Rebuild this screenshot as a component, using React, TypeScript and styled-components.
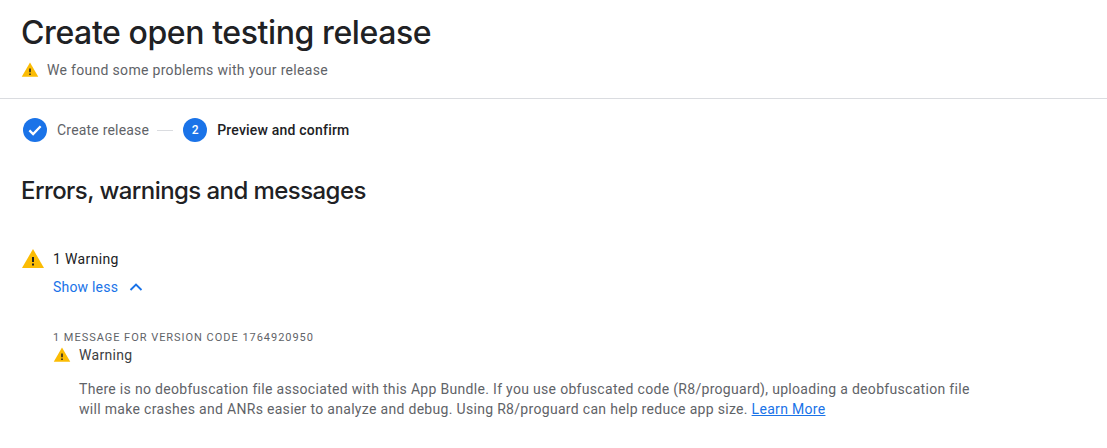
import React from "react";
import styled, { createGlobalStyle } from "styled-components";

const GlobalStyle = createGlobalStyle`
  html, body {
    margin: 0;
    padding: 0;
    background: #fff;
    overflow: hidden;
  }
  body {
    font-family: Roboto, "Liberation Sans", sans-serif;
    color: #202124;
  }
`;

function WarningIcon({ size }: { size: number }) {
  return (
    <svg width={size} height={size} viewBox="0 0 24 24">
      <path d="M1 21 12 2l11 19z" fill="#fbbc04" />
      <path d="M11 10h2v5h-2zM11 16.5h2v2h-2z" fill="#202124" />
    </svg>
  );
}

export default function App() {
  return (
    <Page>
      <GlobalStyle />
      <Header>
        <Title>Create open testing release</Title>
        <Status>
          <WarningIcon size={18} />
          <span>We found some problems with your release</span>
        </Status>
      </Header>
      <Stepper>
        <StepCircle>
          <svg width="18" height="18" viewBox="0 0 24 24">
            <path d="M4.5 12.5 9.5 17.5 19.5 7" fill="none" stroke="#fff" strokeWidth="3" />
          </svg>
        </StepCircle>
        <StepLabel>Create release</StepLabel>
        <StepLine />
        <StepCircle>2</StepCircle>
        <StepLabel $active>Preview and confirm</StepLabel>
      </Stepper>
      <Section>
        <SectionTitle>Errors, warnings and messages</SectionTitle>
        <WarningRow>
          <WarningIcon size={24} />
          <span>1 Warning</span>
        </WarningRow>
        <Details>
          <Toggle>
            Show less
            <svg width="16" height="16" viewBox="0 0 16 16">
              <path d="M2.5 11 8 5.5 13.5 11" fill="none" stroke="#1a73e8" strokeWidth="1.9" />
            </svg>
          </Toggle>
          <Overline>1 message for version code 1764920950</Overline>
          <MessageHead>
            <WarningIcon size={18} />
            <span>Warning</span>
          </MessageHead>
          <MessageBody>
            There is no deobfuscation file associated with this App Bundle. If you use obfuscated
            code (R8/proguard), uploading a deobfuscation file will make crashes and ANRs easier to
            analyze and debug. Using R8/proguard can help reduce app size. <a href="#">Learn More</a>
          </MessageBody>
        </Details>
      </Section>
    </Page>
  );
}

const Page = styled.div`
  width: 1107px;
  height: 448px;
  overflow: hidden;
`;

const Header = styled.header`
  padding: 13px 0 18px 21px;
  border-bottom: 1px solid #dadce0;
`;

const Title = styled.h1`
  margin: 0;
  font-family: Inter, sans-serif;
  font-weight: 450;
  font-size: 32px;
  line-height: 40px;
  letter-spacing: -0.41px;
  color: #202124;
`;

const Status = styled.div`
  display: flex;
  align-items: center;
  gap: 8px;
  margin-top: 7px;
  font-size: 14px;
  line-height: 20px;
  letter-spacing: 0.31px;
  color: #5f6368;
`;

const Stepper = styled.div`
  display: flex;
  align-items: center;
  padding: 19px 0 0 23px;
`;

const StepCircle = styled.div`
  display: flex;
  align-items: center;
  justify-content: center;
  width: 24px;
  height: 24px;
  border-radius: 50%;
  background: #1a73e8;
  color: #fff;
  font-size: 12px;
  font-weight: 500;
`;

const StepLabel = styled.span<{ $active?: boolean }>`
  margin-left: 10px;
  font-size: 14px;
  line-height: 24px;
  letter-spacing: 0.2px;
  font-weight: ${(p) => (p.$active ? 500 : 400)};
  color: ${(p) => (p.$active ? "#202124" : "#5f6368")};
`;

const StepLine = styled.div`
  width: 16px;
  height: 1px;
  margin: 0 10px 0 8px;
  background: #dadce0;
`;

const Section = styled.section`
  padding: 0 0 0 21px;
`;

const SectionTitle = styled.h2`
  margin: 33px 0 0;
  font-family: Inter, sans-serif;
  font-weight: 500;
  font-size: 24px;
  line-height: 32px;
  letter-spacing: -0.57px;
  color: #202124;
`;

const WarningRow = styled.div`
  display: flex;
  align-items: center;
  gap: 8px;
  margin-top: 40px;
  font-size: 14px;
  line-height: 24px;
  letter-spacing: 0.35px;
  color: #202124;
`;

const Details = styled.div`
  padding-left: 32px;
`;

const Toggle = styled.div`
  display: flex;
  align-items: center;
  gap: 10px;
  margin-top: 6px;
  font-size: 14px;
  line-height: 20px;
  letter-spacing: 0.2px;
  color: #1a73e8;
`;

const Overline = styled.div`
  margin-top: 34px;
  font-size: 11px;
  line-height: 14px;
  letter-spacing: 0.97px;
  text-transform: uppercase;
  color: #5f6368;
`;

const MessageHead = styled.div`
  display: flex;
  align-items: center;
  gap: 8px;
  font-size: 14px;
  line-height: 20px;
  letter-spacing: 0.3px;
  color: #3c4043;
`;

const MessageBody = styled.p`
  margin: 14px 0 0 26px;
  width: 900px;
  font-size: 14px;
  line-height: 20px;
  letter-spacing: 0.31px;
  color: #5f6368;

  a {
    color: #1a73e8;
  }
`;
